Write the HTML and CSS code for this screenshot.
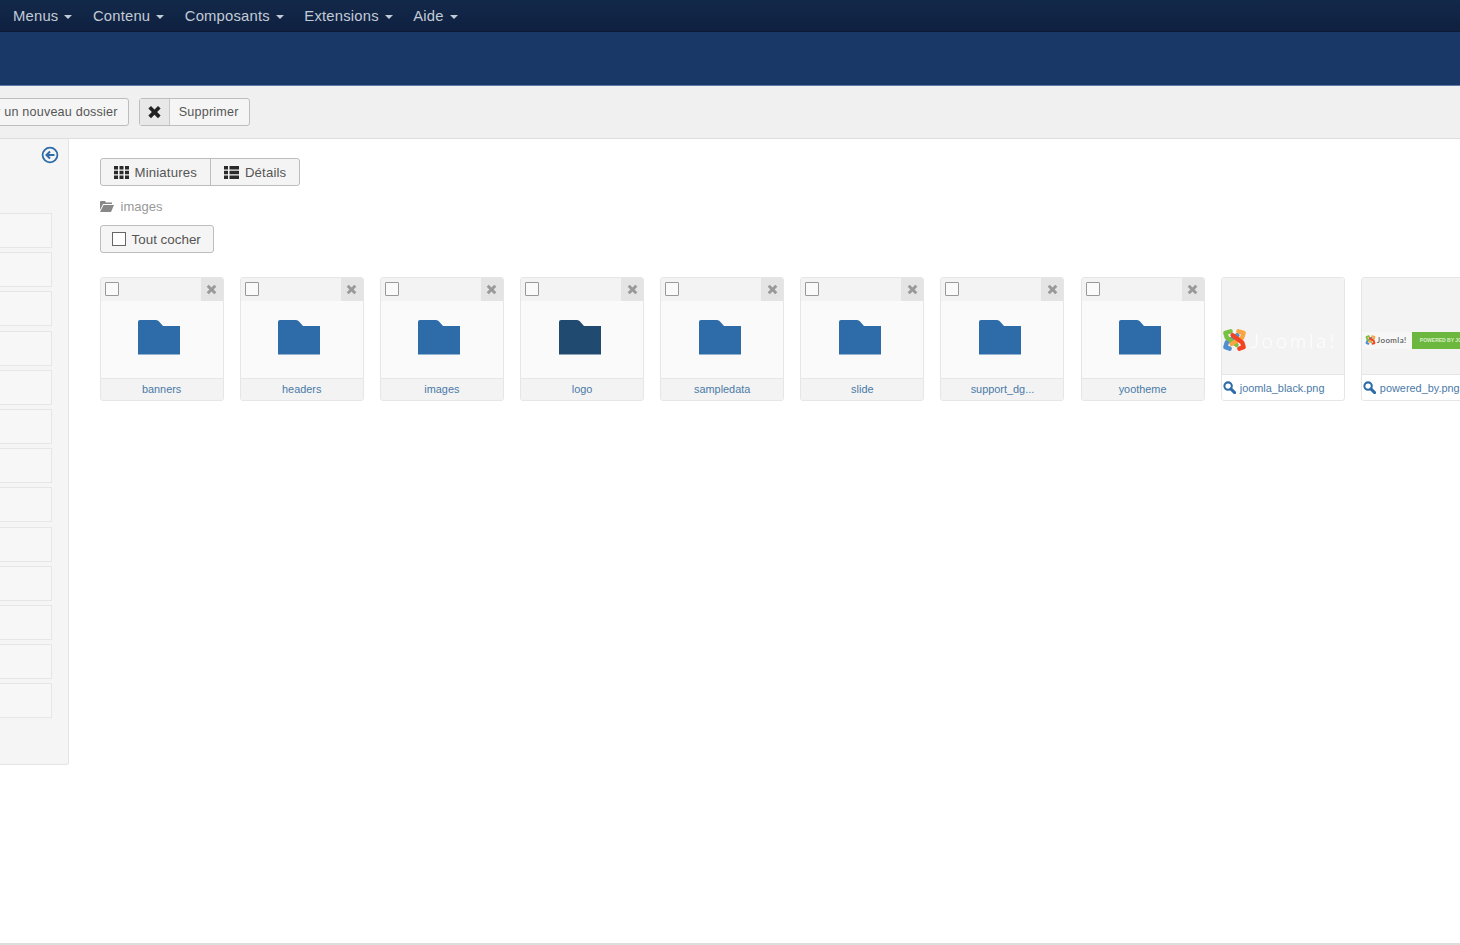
FILE: index.html
```html
<!DOCTYPE html>
<html lang="fr">
<head>
    <meta charset="UTF-8">
    <meta name="viewport" content="width=device-width, initial-scale=1.0">
    <title>Médias</title>
    <link rel="stylesheet" href="styles.css">
</head>
<body>
    <svg class="defs" width="0" height="0">
        <symbol id="folder" viewBox="0 0 42 35"><path d="M0 2Q0 0 2 0H18Q20 0 21 1.500L25 6H42V34.500H0Z"/></symbol>
        <symbol id="cross" viewBox="0 0 16 16"><path d="M1 4L4 1L8 5L12 1L15 4L11 8L15 12L12 15L8 11L4 15L1 12L5 8Z"/></symbol>
        <symbol id="zoom" viewBox="0 0 14 14"><circle cx="5.500" cy="5.500" r="4" fill="none" stroke="currentColor" stroke-width="2.200"/><path d="M8.500 8.500L12.500 12.500" stroke="currentColor" stroke-width="3.200" stroke-linecap="round"/></symbol>
        <symbol id="joomla" viewBox="0 0 26 24">
            <g fill="none" stroke-width="4.600" stroke-linecap="round" stroke-linejoin="round">
                <path stroke="#5091cd" d="M8 21L3.500 19.500L5 14.500L16 7"/>
                <path stroke="#7ac143" d="M9 3L3.500 4.500L5 9.500L15 17"/>
                <path stroke="#f9a541" d="M17 3L22.500 4.500L21 9.500L10 16"/>
                <path stroke="#f44321" d="M18 21L22.500 19.500L21 14.500L11 7"/>
            </g>
        </symbol>
    </svg>

    <!-- Menu principal -->
    <nav class="navbar">
        <a class="nav-item">Menus<span class="caret"></span></a>
        <a class="nav-item">Contenu<span class="caret"></span></a>
        <a class="nav-item">Composants<span class="caret"></span></a>
        <a class="nav-item">Extensions<span class="caret"></span></a>
        <a class="nav-item">Aide<span class="caret"></span></a>
    </nav>
    <header class="page-title"></header>

    <!-- Barre d'outils -->
    <div class="subhead">
        <div class="toolbar-btn btn-new">
            <span class="toolbar-icon"></span>
            <span class="toolbar-label">Créer un nouveau dossier</span>
        </div>
        <div class="toolbar-btn">
            <span class="toolbar-icon"><svg class="icon-cross"><use href="#cross"/></svg></span>
            <span class="toolbar-label">Supprimer</span>
        </div>
    </div>

    <div class="content">
        <!-- Colonne des dossiers, repliée -->
        <aside class="sidebar">
            <svg class="collapse" viewBox="0 0 18 18">
                <circle cx="9" cy="9" r="7.400" fill="none" stroke="#2d6ca8" stroke-width="1.800"/>
                <path d="M13.500 9H6M9 5.500L5.500 9L9 12.500" fill="none" stroke="#2d6ca8" stroke-width="2"/>
            </svg>
            <div class="side-list">
                <div class="side-row"></div>
                <div class="side-row"></div>
                <div class="side-row"></div>
                <div class="side-row"></div>
                <div class="side-row"></div>
                <div class="side-row"></div>
                <div class="side-row"></div>
                <div class="side-row"></div>
                <div class="side-row"></div>
                <div class="side-row"></div>
                <div class="side-row"></div>
                <div class="side-row"></div>
                <div class="side-row"></div>
            </div>
        </aside>

        <main class="media">
            <div class="view-switch">
                <div class="view-btn">
                    <svg class="view-icon" viewBox="0 0 15 13"><path d="M0 0h4v3.500H0zM5.500 0h4v3.500h-4zM11 0h4v3.500h-4zM0 4.700h4v3.500H0zM5.500 4.700h4v3.500h-4zM11 4.700h4v3.500h-4zM0 9.500h4V13H0zM5.500 9.500h4V13h-4zM11 9.500h4V13h-4z"/></svg>
                    Miniatures
                </div>
                <div class="view-btn">
                    <svg class="view-icon" viewBox="0 0 15 13"><path d="M0 0h4v3.500H0zM5.500 0H15v3.500H5.500zM0 4.700h4v3.500H0zM5.500 4.700H15v3.500H5.500zM0 9.500h4V13H0zM5.500 9.500H15V13H5.500z"/></svg>
                    Détails
                </div>
            </div>

            <div class="crumb">
                <svg class="crumb-icon" viewBox="0 0 14 11"><path d="M0 1Q0 0 1 0H5L6 1.500H12V3H3L0 9ZM3.500 4H14L11 11H0Z"/></svg>
                images
            </div>

            <div class="check-all"><span class="check-box"></span>Tout cocher</div>

            <div class="thumbs">
                <div class="thumb">
                    <div class="thumb-head"><span class="thumb-check"></span><span class="thumb-del"><svg class="icon-del"><use href="#cross"/></svg></span></div>
                    <div class="thumb-body"><svg class="folder"><use href="#folder"/></svg></div>
                    <div class="thumb-name">banners</div>
                </div>
                <div class="thumb">
                    <div class="thumb-head"><span class="thumb-check"></span><span class="thumb-del"><svg class="icon-del"><use href="#cross"/></svg></span></div>
                    <div class="thumb-body"><svg class="folder"><use href="#folder"/></svg></div>
                    <div class="thumb-name">headers</div>
                </div>
                <div class="thumb">
                    <div class="thumb-head"><span class="thumb-check"></span><span class="thumb-del"><svg class="icon-del"><use href="#cross"/></svg></span></div>
                    <div class="thumb-body"><svg class="folder"><use href="#folder"/></svg></div>
                    <div class="thumb-name">images</div>
                </div>
                <div class="thumb">
                    <div class="thumb-head"><span class="thumb-check"></span><span class="thumb-del"><svg class="icon-del"><use href="#cross"/></svg></span></div>
                    <div class="thumb-body"><svg class="folder folder-hover"><use href="#folder"/></svg></div>
                    <div class="thumb-name">logo</div>
                </div>
                <div class="thumb">
                    <div class="thumb-head"><span class="thumb-check"></span><span class="thumb-del"><svg class="icon-del"><use href="#cross"/></svg></span></div>
                    <div class="thumb-body"><svg class="folder"><use href="#folder"/></svg></div>
                    <div class="thumb-name">sampledata</div>
                </div>
                <div class="thumb">
                    <div class="thumb-head"><span class="thumb-check"></span><span class="thumb-del"><svg class="icon-del"><use href="#cross"/></svg></span></div>
                    <div class="thumb-body"><svg class="folder"><use href="#folder"/></svg></div>
                    <div class="thumb-name">slide</div>
                </div>
                <div class="thumb">
                    <div class="thumb-head"><span class="thumb-check"></span><span class="thumb-del"><svg class="icon-del"><use href="#cross"/></svg></span></div>
                    <div class="thumb-body"><svg class="folder"><use href="#folder"/></svg></div>
                    <div class="thumb-name">support_dg...</div>
                </div>
                <div class="thumb">
                    <div class="thumb-head"><span class="thumb-check"></span><span class="thumb-del"><svg class="icon-del"><use href="#cross"/></svg></span></div>
                    <div class="thumb-body"><svg class="folder"><use href="#folder"/></svg></div>
                    <div class="thumb-name">yootheme</div>
                </div>

                <!-- Images -->
                <div class="thumb thumb-image">
                    <div class="image-body">
                        <svg class="joomla-logo"><use href="#joomla"/></svg>
                        <span class="joomla-word">Joomla!</span>
                    </div>
                    <div class="image-name"><svg class="icon-zoom"><use href="#zoom"/></svg>joomla_black.png</div>
                </div>
                <div class="thumb thumb-image">
                    <div class="image-body">
                        <div class="powered">
                            <div class="powered-left">
                                <svg class="powered-logo"><use href="#joomla"/></svg>
                                <span class="powered-word">Joomla!</span>
                            </div>
                            <div class="powered-right">POWERED BY JOOMLA</div>
                        </div>
                    </div>
                    <div class="image-name"><svg class="icon-zoom"><use href="#zoom"/></svg>powered_by.png</div>
                </div>
            </div>
        </main>
    </div>

    <footer class="footer"></footer>
</body>
</html>
```

FILE: styles.css
```css
/* Page */
html, body {
    margin: 0;
    height: 945px;
    overflow: hidden;
}

body {
    display: flex;
    flex-direction: column;
    background: #fff;
    font-family: "Liberation Sans", Arial, sans-serif;
    color: #333;
}

.defs {
    position: absolute;
}

/* Menu principal */
.navbar {
    display: flex;
    flex: none;
    height: 31px;
    padding-left: 13px;
    gap: 20.500px;
    align-items: center;
    background: linear-gradient(#13294a, #0f2040);
    border-bottom: 1px solid #0c1a33;
}

.nav-item {
    font-size: 14.800px;
    letter-spacing: .2px;
    color: #c3cbd6;
}

.caret {
    display: inline-block;
    margin-left: 6px;
    vertical-align: middle;
    border-top: 4px solid #c3cbd6;
    border-left: 4px solid transparent;
    border-right: 4px solid transparent;
}

.page-title {
    flex: none;
    height: 53px;
    background: #1a3867;
    border-bottom: 1px solid #5d7ca6;
}

/* Barre d'outils */
.subhead {
    display: flex;
    flex: none;
    box-sizing: border-box;
    height: 53px;
    padding-top: 12px;
    gap: 10px;
    background: #f0f0f0;
    border-bottom: 1px solid #ddd;
}

.toolbar-btn {
    display: flex;
    box-sizing: border-box;
    height: 28px;
    background: #f5f5f5;
    border: 1px solid #bdbdbd;
    border-radius: 3px;
    font-size: 12.600px;
    letter-spacing: .2px;
    color: #555;
}

.btn-new {
    margin-left: -72px;
}

.toolbar-icon {
    display: flex;
    align-items: center;
    justify-content: center;
    width: 29px;
    background: #e8e8e8;
    border-right: 1px solid #c8c8c8;
}

.toolbar-label {
    padding: 0 10px 0 9px;
    line-height: 26px;
    white-space: nowrap;
}

.icon-cross {
    width: 15px;
    height: 14px;
    fill: #222;
}

/* Contenu */
.content {
    display: flex;
    flex: 1;
    min-height: 0;
}

.sidebar {
    flex: none;
    box-sizing: border-box;
    width: 69px;
    height: 626px;
    padding-top: 7px;
    background: #f5f5f5;
    border-right: 1px solid #e4e4e4;
    border-bottom: 1px solid #e4e4e4;
    border-bottom-right-radius: 3px;
}

.collapse {
    display: block;
    width: 18px;
    height: 18px;
    margin: 0 0 0 41px;
}

.side-list {
    display: flex;
    flex-direction: column;
    gap: 4.200px;
    margin-top: 49px;
}

.side-row {
    box-sizing: border-box;
    width: 52px;
    height: 35px;
    background: #f7f7f7;
    border: 1px solid #e6e6e6;
    border-left: 0;
}

.media {
    flex: 1;
    min-width: 0;
    padding: 19px 0 0 30.600px;
}

.view-switch {
    display: flex;
    width: max-content;
    height: 28px;
    box-sizing: border-box;
    background: #f4f4f4;
    border: 1px solid #bdbdbd;
    border-radius: 3px;
}

.view-btn {
    display: flex;
    align-items: center;
    gap: 6px;
    padding: 0 13px;
    font-size: 13.200px;
    letter-spacing: .15px;
    color: #555;
}

.view-btn + .view-btn {
    border-left: 1px solid #bdbdbd;
}

.view-icon {
    width: 15px;
    height: 13px;
    fill: #2a2a2a;
}

.crumb {
    display: flex;
    align-items: center;
    gap: 7px;
    height: 16px;
    margin-top: 12px;
    font-size: 13px;
    color: #999;
}

.crumb-icon {
    width: 14px;
    height: 11px;
    fill: #888;
}

.check-all {
    display: flex;
    align-items: center;
    box-sizing: border-box;
    width: 114px;
    height: 28px;
    margin-top: 11px;
    padding-left: 11px;
    background: #f5f5f5;
    border: 1px solid #bdbdbd;
    border-radius: 3px;
    font-size: 13.400px;
    color: #555;
}

.check-box {
    box-sizing: border-box;
    width: 14px;
    height: 14px;
    margin-right: 6px;
    background: #fff;
    border: 1px solid #666;
}

/* Vignettes */
.thumbs {
    display: flex;
    gap: 16.150px;
    margin-top: 24px;
}

.thumb {
    display: flex;
    flex: none;
    flex-direction: column;
    box-sizing: border-box;
    width: 124px;
    height: 124px;
    background: #fafafa;
    border: 1px solid #e6e6e6;
    border-radius: 3px;
    overflow: hidden;
}

.thumb-head {
    display: flex;
    flex: none;
    justify-content: space-between;
    height: 23px;
    background: #f3f3f3;
}

.thumb-check {
    box-sizing: border-box;
    width: 14px;
    height: 14px;
    margin: 4px 0 0 4px;
    background: #fafafa;
    border: 1px solid #999;
    border-radius: 1px;
}

.thumb-del {
    display: flex;
    align-items: center;
    justify-content: center;
    width: 22px;
    background: #e4e4e4;
}

.icon-del {
    width: 11px;
    height: 11px;
    fill: #999;
}

.thumb-body {
    display: flex;
    flex: 1;
    align-items: center;
    justify-content: center;
    padding: 0 5px 4px 0;
}

.folder {
    width: 42px;
    height: 35px;
    fill: #2d6ca8;
}

.folder-hover {
    fill: #204a70;
}

.thumb-name {
    flex: none;
    box-sizing: border-box;
    height: 22px;
    background: #f3f3f3;
    border-top: 1px solid #e6e6e6;
    font-size: 10.900px;
    line-height: 21px;
    text-align: center;
    color: #4a7aa8;
}

.thumb-image {
    background: #fff;
}

.image-body {
    display: flex;
    flex: none;
    align-items: center;
    box-sizing: border-box;
    height: 97px;
    padding-top: 28px;
    background: #f3f3f3;
    border-bottom: 1px solid #e6e6e6;
}

.joomla-logo {
    flex: none;
    width: 25px;
    height: 24px;
}

.joomla-word {
    margin-left: 4px;
    font-family: Lato, sans-serif;
    font-weight: 300;
    font-size: 20px;
    letter-spacing: 3px;
    color: #fff;
}

.powered {
    display: flex;
    flex: none;
    width: 122px;
    height: 17px;
}

.powered-left {
    display: flex;
    flex: none;
    align-items: center;
    box-sizing: border-box;
    width: 50px;
    padding-left: 3px;
    background: #f7f7f7;
}

.powered-logo {
    flex: none;
    width: 11px;
    height: 10px;
}

.powered-word {
    margin-left: 1px;
    font-family: Lato, sans-serif;
    font-size: 8px;
    letter-spacing: .4px;
    color: #444;
}

.powered-right {
    flex: 1;
    padding-left: 8px;
    background: #6cb83f;
    font-size: 5px;
    font-weight: bold;
    line-height: 17px;
    white-space: nowrap;
    color: #d9efc9;
    overflow: hidden;
}

.image-name {
    display: flex;
    align-items: center;
    gap: 4px;
    height: 25px;
    padding-left: 1px;
    font-size: 10.900px;
    white-space: nowrap;
    color: #4a7aa8;
}

.icon-zoom {
    flex: none;
    width: 13px;
    height: 13px;
    color: #2d6ca8;
}

/* Pied de page */
.footer {
    flex: none;
    height: 0;
    border-top: 2px solid #ddd;
}
```
